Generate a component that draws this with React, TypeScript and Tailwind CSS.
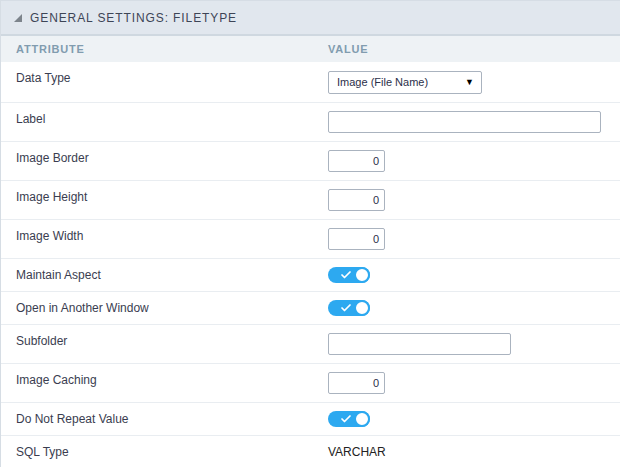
import { Check } from 'lucide-react'

type Row =
  | { label: string; kind: 'select'; value: string }
  | { label: string; kind: 'text'; width: string }
  | { label: string; kind: 'number'; value: string }
  | { label: string; kind: 'toggle' }
  | { label: string; kind: 'plain'; value: string }

const ROWS: Row[] = [
  { label: 'Data Type', kind: 'select', value: 'Image (File Name)' },
  { label: 'Label', kind: 'text', width: 'w-[273px]' },
  { label: 'Image Border', kind: 'number', value: '0' },
  { label: 'Image Height', kind: 'number', value: '0' },
  { label: 'Image Width', kind: 'number', value: '0' },
  { label: 'Maintain Aspect', kind: 'toggle' },
  { label: 'Open in Another Window', kind: 'toggle' },
  { label: 'Subfolder', kind: 'text', width: 'w-[183px]' },
  { label: 'Image Caching', kind: 'number', value: '0' },
  { label: 'Do Not Repeat Value', kind: 'toggle' },
  { label: 'SQL Type', kind: 'plain', value: 'VARCHAR' },
]

function Toggle() {
  return (
    <div className="relative h-[16px] w-[42px] rounded-full bg-[#2da9f0]">
      <Check className="absolute left-[12px] top-[2px] h-[12px] w-[12px] text-white" strokeWidth={3.5} />
      <div className="absolute right-0 top-0 h-[16px] w-[16px] rounded-full border-2 border-[#2da9f0] bg-white" />
    </div>
  )
}

function Value({ row }: { row: Row }) {
  if (row.kind === 'select')
    return (
      <div className="mt-[1px] flex h-[23px] w-[154px] items-center justify-between rounded-[2px] border border-[#aab3bf] bg-white pl-[8px] pr-[7px] text-[11px] text-[#2b2f4a]">
        <span>{row.value}</span>
        <span className="text-[9px] text-black">▼</span>
      </div>
    )
  if (row.kind === 'text')
    return <div className={`${row.width} h-[22px] rounded-[2px] border border-[#aab3bf] bg-white`} />
  if (row.kind === 'number')
    return (
      <div className="flex h-[22px] w-[57px] items-center justify-end rounded-[2px] border border-[#aab3bf] bg-white pr-[5px] text-[11px] text-[#2b2f4a]">
        {row.value}
      </div>
    )
  if (row.kind === 'toggle') return <Toggle />
  return <div className="text-[12px] leading-[16px] text-[#222]">{row.value}</div>
}

export default function App() {
  return (
    <div className="min-h-[467px] w-[620px] border-l border-[#d6dde4] bg-white font-['Liberation_Sans',Arial,sans-serif]">
      <div className="flex h-[36px] items-center gap-[8px] border-t border-b-2 border-t-[#d6dde5] border-b-[#cfd8e0] bg-[#e1e7ee] pl-[13px]">
        <svg width="8" height="8" viewBox="0 0 8 8">
          <polygon points="8,0 8,8 0,8" fill="#7d848c" />
        </svg>
        <span className="text-[12px] tracking-[0.9px] text-[#3d4556]">GENERAL SETTINGS: FILETYPE</span>
      </div>
      <div className="flex h-[26px] items-center bg-[#eef2f5] text-[11px] font-semibold tracking-[0.8px] text-[#819caf]">
        <div className="w-[327px] pl-[15px]">ATTRIBUTE</div>
        <div>VALUE</div>
      </div>
      {ROWS.map((row) => (
        <div key={row.label} className="flex border-b border-[#e9edf1] py-[8px]">
          <div className="w-[327px] pl-[15px] text-[12px] leading-[16px] text-[#3a3d50]">{row.label}</div>
          <Value row={row} />
        </div>
      ))}
    </div>
  )
}
